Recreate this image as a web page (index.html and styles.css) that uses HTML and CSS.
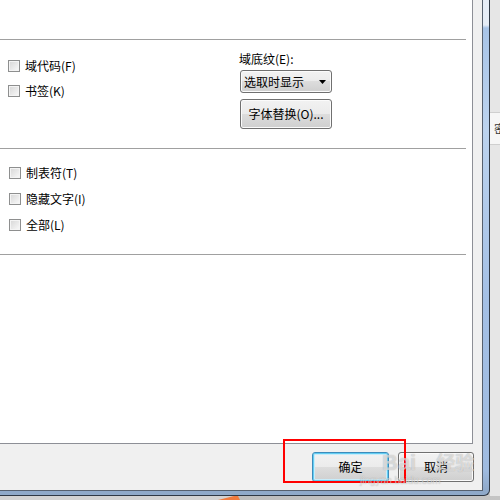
FILE: index.html
```html
<!DOCTYPE html>
<html lang="zh-CN">
<head>
<meta charset="utf-8">
<title>选项</title>
<link rel="stylesheet" href="styles.css">
</head>
<body>
<div class="screen">
  <div class="frame">
    <div class="client">
      <div class="panel">
        <div class="top-gap"></div>
        <section class="group g1">
          <div class="col-left">
            <label class="check"><span class="box"></span>域代码(F)</label>
            <label class="check"><span class="box"></span>书签(K)</label>
          </div>
          <div class="col-right">
            <div class="field-label">域底纹(E):</div>
            <div class="select"><span>选取时显示</span><svg class="arrow" width="7" height="4" viewBox="0 0 7 4"><polygon points="0,0 7,0 3.5,4" fill="#000"/></svg></div>
            <button class="btn wide">字体替换(O)...</button>
          </div>
        </section>
        <section class="group g2">
          <label class="check"><span class="box"></span>制表符(T)</label>
          <label class="check"><span class="box"></span>隐藏文字(I)</label>
          <label class="check"><span class="box"></span>全部(L)</label>
        </section>
        <section class="group rest"></section>
      </div>
      <div class="footer">
        <button class="btn ok">确定</button>
        <button class="btn cancel">取消</button>
      </div>
    </div>
  </div>
  <div class="side">
    <div class="tab">密</div>
  </div>
  <div class="taskbar">
    <svg class="pointer" width="22" height="4" viewBox="0 0 22 4"><polygon points="0,4 16,0 20,0 22,4" fill="#f07b3f"/></svg>
  </div>

  <div class="highlight"></div>
  <div class="watermark">
    <div class="wm-main"><span class="wm-bai">Bai</span><span class="wm-jy">经验</span></div>
    <div class="wm-url">jingyan.baidu.com</div>
  </div>
</div>
</body>
</html>
```

FILE: styles.css
```css
* { box-sizing: border-box; }

html, body {
  margin: 0;
  padding: 0;
}

body {
  width: 500px;
  height: 500px;
  overflow: hidden;
  background: #c9c9c9;
  font-family: "Noto Sans CJK SC", "Liberation Sans", sans-serif;
  font-size: 12px;
  color: #000;
}

.screen {
  position: relative;
  width: 500px;
  height: 500px;
  display: grid;
  grid-template-columns: 490px 10px;
  grid-template-rows: 496px 4px;
}

/* window frame */
.frame {
  grid-column: 1;
  grid-row: 1;
  padding: 0 6px 4px 0;
  border-right: 1px solid #2f3844;
  border-bottom: 1px solid #2f3844;
  border-bottom-right-radius: 6px;
  background: linear-gradient(180deg, #e6edf6 0, #e6edf6 25px, #a8c4e7 28px, #bcd3ee 130px, #a4c0e5 300px, #9fbbe0 470px, #8fa9c9 491px, #8fa9c9 100%);
}

.client {
  width: 483px;
  height: 491px;
  border-right: 1px solid #56606e;
  border-bottom: 1px solid #56606e;
  background: #f0f0f0;
  display: flex;
  flex-direction: column;
}

.panel {
  width: 473px;
  height: 444px;
  background: #fff;
  border-right: 1px solid #8d8f96;
  border-bottom: 1px solid #8d8f96;
  display: flex;
  flex-direction: column;
}

.top-gap { height: 39px; flex: none; }

.group {
  flex: none;
  margin-right: 6px;
  border-top: 1px solid #a0a0a0;
}

.g1 {
  height: 109px;
  display: grid;
  grid-template-columns: 232px 92px;
  padding-left: 8px;
}

.col-left {
  padding-top: 13px;
  display: flex;
  flex-direction: column;
}

.col-left .check { height: 25px; }

.col-right {
  padding-top: 11px;
  display: flex;
  flex-direction: column;
}

.field-label {
  line-height: 16px;
  height: 16px;
  margin-left: -1px;
  margin-bottom: 3px;
}

.g2 {
  height: 106px;
  padding: 11px 0 0 9px;
  display: flex;
  flex-direction: column;
}

.g2 .check { height: 26px; }

.rest { flex: 1; }

/* checkbox */
.check {
  display: flex;
  align-items: center;
  gap: 5px;
  white-space: nowrap;
  line-height: 16px;
}

.box {
  width: 12px;
  height: 12px;
  flex: none;
  border: 1px solid #8e8f8f;
  background: linear-gradient(135deg, #d6d6d6 0%, #e8e8e8 50%, #fafafa 100%);
  box-shadow: inset 0 0 0 1px #f4f4f4;
}

/* select */
.select {
  width: 92px;
  height: 23px;
  border: 1px solid #707070;
  border-radius: 3px;
  background: linear-gradient(180deg, #f2f2f2 0%, #ebebeb 50%, #dddddd 50%, #cfcfcf 100%);
  box-shadow: inset 0 0 0 1px #fbfbfb;
  display: flex;
  align-items: center;
  justify-content: space-between;
  padding: 0 5px 0 3px;
  line-height: 16px;
}

.arrow { display: block; flex: none; }

/* buttons */
.btn {
  font: inherit;
  color: #000;
  padding: 0;
  height: 30px;
  border: 1px solid #707070;
  border-radius: 3px;
  background: linear-gradient(180deg, #f2f2f2 0%, #ebebeb 50%, #dddddd 50%, #cfcfcf 100%);
  box-shadow: inset 0 0 0 1px #fbfbfb;
  line-height: 16px;
  text-align: center;
}

.wide {
  width: 92px;
  margin-top: 6px;
}

.footer {
  flex: 1;
  display: flex;
  justify-content: flex-end;
  align-items: flex-start;
  gap: 9px;
  padding: 8px 8px 0 0;
}

.ok {
  width: 77px;
  border-color: #3c8cbc;
  box-shadow: inset 0 0 0 1px #62cdf2, inset 0 0 0 2px #c8ecfa;
}

.cancel { width: 76px; }

/* right side of screen */
.side {
  grid-column: 2;
  grid-row: 1;
  background: #e6e6e6;
  overflow: hidden;
  padding-top: 112px;
}

.tab {
  height: 33px;
  background: #f6f6f6;
  border-top: 1px solid #cfcfcf;
  border-bottom: 1px solid #cfcfcf;
  padding-left: 4px;
  line-height: 31px;
  white-space: nowrap;
  color: #333;
}

.taskbar {
  grid-column: 1 / span 2;
  grid-row: 2;
  background: linear-gradient(90deg, #d2d2d2 0, #d2d2d2 230px, #bdbdbd 240px, #c4c4c4 100%);
  padding-left: 218px;
  overflow: hidden;
}

.pointer { display: block; }

/* overlays */
.highlight {
  position: absolute;
  left: 283px;
  top: 439px;
  width: 123px;
  height: 44px;
  border: 2px solid #ff0000;
}

.watermark {
  position: absolute;
  left: 382px;
  top: 449px;
  pointer-events: none;
  color: rgba(255, 255, 255, 0.55);
  text-shadow: 0 0 1px rgba(110, 110, 110, 0.55);
}

.wm-main {
  display: flex;
  align-items: baseline;
  gap: 20px;
  font-family: "Liberation Sans", "Noto Sans CJK SC", sans-serif;
  font-size: 22px;
  line-height: 26px;
  font-weight: bold;
}

.wm-jy {
  font-family: "Noto Sans CJK SC", sans-serif;
  font-size: 19px;
}

.wm-url {
  font-family: "Liberation Sans", sans-serif;
  font-size: 10px;
  line-height: 10px;
  margin-left: -22px;
  color: rgba(255, 255, 255, 0.5);
}
```
